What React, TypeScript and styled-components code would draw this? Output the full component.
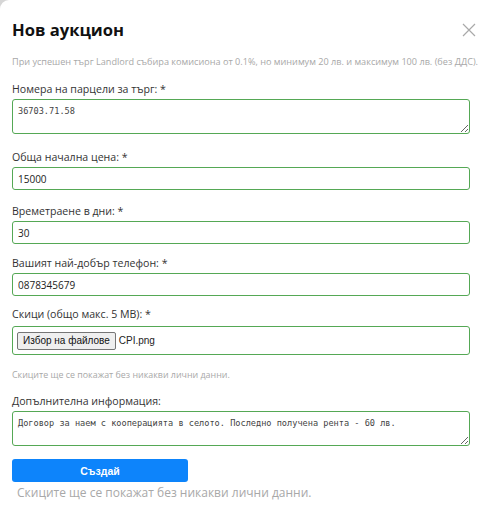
import React from "react";
import styled, { createGlobalStyle } from "styled-components";

const Global = createGlobalStyle`
  html, body { margin: 0; padding: 0; background: #d6d6d6; }
  body { font-family: "Open Sans", "Noto Sans", sans-serif; color: #333; }
`;

const Modal = styled.div`
  background: #fff;
  border-top-left-radius: 9px;
  min-height: 512px;
  box-sizing: border-box;
  padding: 16px 6px 0 12px;
`;

const Header = styled.div`
  display: flex;
  align-items: center;
  justify-content: space-between;
  height: 26px;
  margin-top: 1px;
`;

const Title = styled.h2`
  margin: 0;
  font-size: 16.6px;
  font-weight: 700;
  color: #111;
  line-height: 26px;
`;

const Close = styled.button`
  border: 0;
  background: none;
  padding: 0;
  width: 16px;
  height: 16px;
  display: flex;
  align-items: center;
  justify-content: center;
  cursor: pointer;
`;

const Notice = styled.p`
  margin: 13px 0 0;
  font-size: 9.15px;
  color: #a8a8a8;
  line-height: 12px;
  white-space: nowrap;
`;

const Form = styled.form`
  display: flex;
  flex-direction: column;
  margin-top: 14px;
  width: 458px;
`;

const Field = styled.div<{ $gap?: number }>`
  display: flex;
  flex-direction: column;
  margin-bottom: ${(p) => p.$gap ?? 14}px;
`;

const Label = styled.label<{ $space?: number }>`
  font-size: 10.6px;
  color: #333;
  line-height: 14px;
  margin-bottom: ${(p) => p.$space ?? 3}px;
`;

const Area = styled.textarea`
  box-sizing: border-box;
  height: 35px;
  border: 1px solid #55a855;
  border-radius: 3px;
  padding: 6px 5px;
  font-family: "DejaVu Sans Mono", monospace;
  font-size: 8.6px;
  color: #444;
  resize: vertical;
  outline: none;
`;

const Input = styled.input`
  box-sizing: border-box;
  height: 23px;
  border: 1px solid #55a855;
  border-radius: 3px;
  padding: 0 5px;
  font-family: "Open Sans", sans-serif;
  font-size: 10px;
  color: #222;
  outline: none;
`;

const FileBox = styled.div`
  box-sizing: border-box;
  height: 29px;
  border: 1px solid #55a855;
  border-radius: 3px;
  padding: 0 4px;
  display: flex;
  align-items: center;
  gap: 3px;
  font-family: "Liberation Sans", Arial, sans-serif;
  font-size: 10px;
  color: #222;
`;

const FileButton = styled.span`
  box-sizing: border-box;
  height: 18px;
  padding: 0 5px;
  display: inline-flex;
  align-items: center;
  background: #efefef;
  border: 1px solid #767676;
  border-radius: 2px;
  color: #111;
`;

const Hint = styled.p`
  margin: 14px 0 13px;
  font-size: 8.9px;
  color: #a8a8a8;
  line-height: 12px;
`;

const Submit = styled.button`
  margin-top: 1px;
  width: 176px;
  height: 23px;
  border: 0;
  border-radius: 3px;
  background: #0d84fb;
  color: #fff;
  font-family: "Liberation Sans", Arial, sans-serif;
  font-weight: 700;
  font-size: 10.5px;
  cursor: pointer;
`;

const Footer = styled.p`
  margin: 3px 0 0 5px;
  font-size: 12px;
  color: #a8a8a8;
  line-height: 16px;
`;

export default function App() {
  return (
    <>
      <Global />
      <Modal>
        <Header>
          <Title>Нов аукцион</Title>
          <Close aria-label="close">
            <svg width="14" height="14" viewBox="0 0 14 14">
              <path d="M1 1L13 13M13 1L1 13" stroke="#a9a9a9" strokeWidth="1.2" />
            </svg>
          </Close>
        </Header>
        <Notice>
          При успешен търг Landlord събира комисиона от 0.1%, но минимум 20 лв. и максимум 100 лв. (без ДДС).
        </Notice>
        <Form>
          <Field $gap={16}>
            <Label>Номера на парцели за търг: *</Label>
            <Area defaultValue="36703.71.58" />
          </Field>
          <Field>
            <Label>Обща начална цена: *</Label>
            <Input defaultValue="15000" />
          </Field>
          <Field $gap={12}>
            <Label>Времетраене в дни: *</Label>
            <Input defaultValue="30" />
          </Field>
          <Field $gap={11}>
            <Label>Вашият най-добър телефон: *</Label>
            <Input defaultValue="0878345679" />
          </Field>
          <Field $gap={0}>
            <Label $space={5}>Скици (общо макс. 5 MB): *</Label>
            <FileBox>
              <FileButton>Избор на файлове</FileButton>
              <span>CPI.png</span>
            </FileBox>
          </Field>
          <Hint>Скиците ще се покажат без никакви лични данни.</Hint>
          <Field $gap={12}>
            <Label>Допълнителна информация:</Label>
            <Area defaultValue="Договор за наем с кооперацията в селото. Последно получена рента - 60 лв." />
          </Field>
          <Submit type="button">Създай</Submit>
          <Footer>Скиците ще се покажат без никакви лични данни.</Footer>
        </Form>
      </Modal>
    </>
  );
}
